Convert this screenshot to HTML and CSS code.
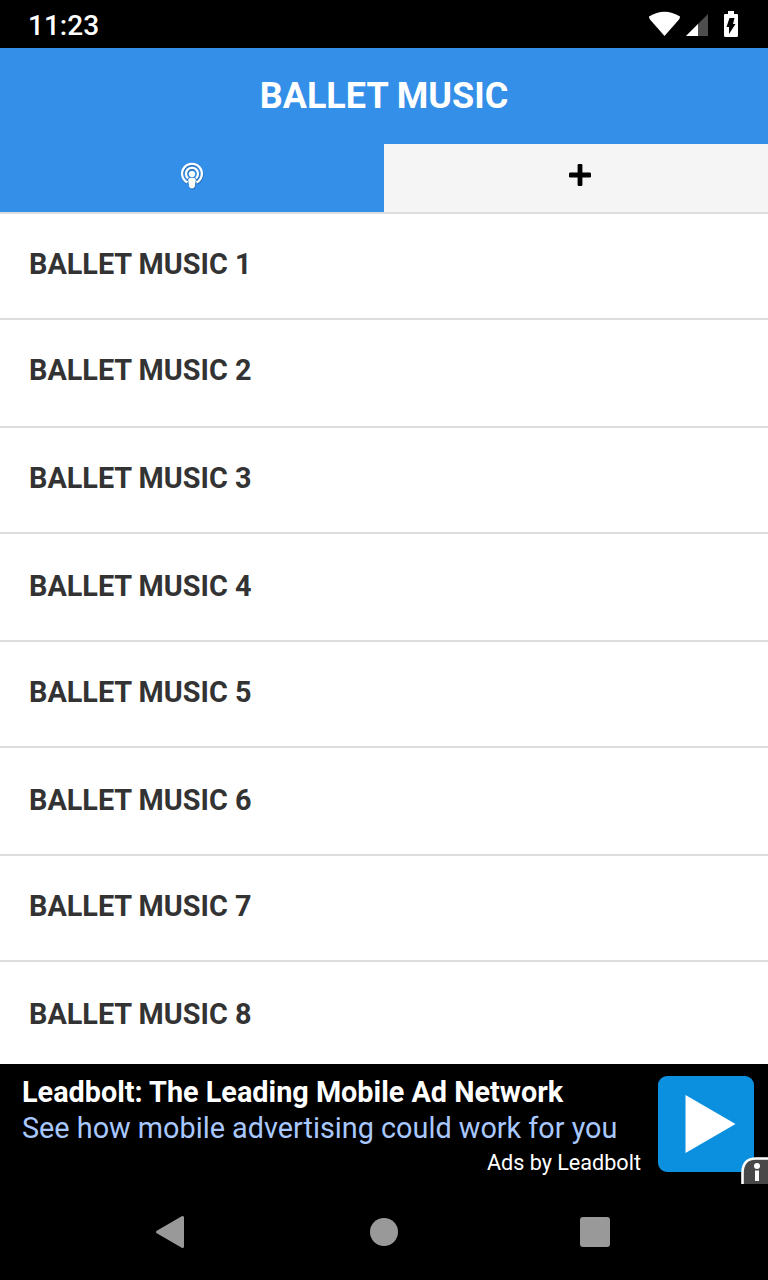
FILE: index.html
```html
<!DOCTYPE html>
<html lang="en">
<head>
<meta charset="utf-8">
<title>Ballet Music</title>
<link rel="stylesheet" href="styles.css">
</head>
<body>
<div class="status">
  <span class="time">11:23</span>
  <svg class="status-icons" width="96" height="48" viewBox="0 0 96 48">
    <path d="M1 16.500Q16.500 7 32 16.500Q32 18 31 19.500L16.500 36L2 19.500Q1 18 1 16.500Z" fill="#fff"/>
    <path d="M38 36L60 14V36Z" fill="#4d4d4d"/>
    <path d="M38 36L50 24V36Z" fill="#fff"/>
    <path d="M80 11h6v3h3q1 0 1 1v20.500q0 1.500-1.500 1.500h-11q-1.500 0-1.500-1.500V15q0-1 1-1h3Z" fill="#fff"/>
    <path d="M81.500 18h5l-1.500 6h2.500L81 34V27h-2.500Z" fill="#000"/>
  </svg>
</div>
<header class="title">BALLET MUSIC</header>
<nav class="tabs">
  <div class="tab active">
    <svg width="26" height="30" viewBox="0 0 26 30">
      <g transform="translate(.4 1)" fill="none" stroke="#1d5c99" stroke-width="2.400" opacity=".75">
        <path d="M8.500 21.500A9.900 9.900 0 1 1 17.500 21.500"/>
        <path d="M9 17.300A6 6 0 1 1 17 17.300"/>
        <path d="M9.200 19.200q0-2.400 3.800-2.400t3.800 2.400l-1 6.300q-.3 1.900-2.800 1.900t-2.800-1.900Z" fill="#1d5c99" stroke="none"/>
      </g>
      <g fill="none" stroke="#fff" stroke-width="2.300">
        <path d="M8.500 21.500A9.900 9.900 0 1 1 17.500 21.500"/>
        <path d="M9 17.300A6 6 0 1 1 17 17.300"/>
      </g>
      <circle cx="13" cy="13" r="3.100" fill="#fff"/>
      <path d="M9.200 19.200q0-2.400 3.800-2.400t3.800 2.400l-1 6.300q-.3 1.900-2.800 1.900t-2.800-1.900Z" fill="#fff"/>
    </svg>
  </div>
  <div class="tab">
    <svg width="22" height="22" viewBox="0 0 22 22">
      <rect x="8.600" width="4.800" height="22" rx="1.200"/>
      <rect y="8.600" width="22" height="4.800" rx="1.200"/>
    </svg>
  </div>
</nav>
<main class="list">
  <div class="row">BALLET MUSIC 1</div>
  <div class="row tall">BALLET MUSIC 2</div>
  <div class="row">BALLET MUSIC 3</div>
  <div class="row tall low">BALLET MUSIC 4</div>
  <div class="row">BALLET MUSIC 5</div>
  <div class="row tall low">BALLET MUSIC 6</div>
  <div class="row">BALLET MUSIC 7</div>
  <div class="row tall low">BALLET MUSIC 8</div>
</main>
<aside class="ad">
  <div class="ad-text">
    <div class="ad-title">Leadbolt: The Leading Mobile Ad Network</div>
    <div class="ad-sub">See how mobile advertising could work for you</div>
    <div class="ad-by">Ads by Leadbolt</div>
  </div>
  <svg class="ad-icon" width="96" height="96" viewBox="0 0 96 96">
    <rect width="96" height="96" rx="9" fill="#0a90df"/>
    <path d="M27.500 19L77.500 48L27.500 77Z" fill="#fff"/>
  </svg>
  <svg class="info" width="28" height="28" viewBox="0 0 28 28">
    <path d="M2.500 28V17Q2.500 2.500 16 2.500H28V28Z" fill="#484848"/>
    <path d="M2.500 28V17Q2.500 2.500 16 2.500H28" fill="none" stroke="#fff" stroke-width="2.600"/>
    <circle cx="17" cy="10" r="3" fill="#fff"/>
    <path d="M15 14.500h4V25h-4Z" fill="#fff"/>
  </svg>
</aside>
<footer class="navbar">
  <svg width="768" height="96" viewBox="0 0 768 96">
    <g fill="#999" stroke="#999" stroke-linejoin="round">
      <path d="M157.500 48L182.500 33.500V62.500Z" stroke-width="3"/>
      <circle cx="384" cy="48" r="14" stroke="none"/>
      <rect x="580" y="33" width="30" height="30" rx="3" stroke="none"/>
    </g>
  </svg>
</footer>
</body>
</html>
```

FILE: styles.css
```css
* { box-sizing: border-box; }
body {
  margin: 0;
  width: 768px;
  height: 1280px;
  overflow: hidden;
  display: flex;
  flex-direction: column;
  background: #fff;
  font-family: Roboto, "Liberation Sans", sans-serif;
}
svg { display: block; flex: none; }
.status {
  height: 48px;
  flex: none;
  display: flex;
  justify-content: space-between;
  padding: 0 24px 0 28px;
  background: #000;
}
.time {
  color: #fff;
  font-size: 28px;
  font-weight: 500;
  line-height: 52px;
}
.title {
  height: 96px;
  flex: none;
  background: #348fe8;
  color: #fff;
  font-size: 36px;
  font-weight: 700;
  line-height: 97px;
  text-align: center;
}
.tabs {
  height: 70px;
  flex: none;
  display: flex;
  border-bottom: 2px solid #ddd;
}
.tab {
  width: 50%;
  display: flex;
  justify-content: center;
  align-items: flex-start;
  padding-top: 20px;
  padding-left: 8px;
  background: #f5f5f5;
}
.tab.active {
  background: #348fe8;
  padding-top: 17px;
  padding-left: 0;
}
.list {
  height: 850px;
  flex: none;
  overflow: hidden;
}
.row {
  height: 106px;
  padding-left: 29px;
  border-bottom: 2px solid #ddd;
  color: #333;
  font-size: 28.8px;
  font-weight: 700;
  line-height: 100px;
}
.row.tall { height: 108px; }
.row.low { line-height: 104px; }
.ad {
  height: 120px;
  flex: none;
  position: relative;
  display: flex;
  justify-content: space-between;
  padding: 12px 14px 0 22px;
  background: #000;
}
.ad-text { width: 619px; white-space: nowrap; }
.ad-title {
  color: #fff;
  font-size: 28.8px;
  font-weight: 700;
  line-height: 33px;
}
.ad-sub {
  color: #a8c8ff;
  font-size: 28.8px;
  line-height: 38px;
}
.ad-by {
  color: #fff;
  font-size: 21.6px;
  line-height: 32px;
  text-align: right;
}
.info {
  position: absolute;
  right: 0;
  bottom: 0;
}
.navbar {
  height: 96px;
  flex: none;
  background: #000;
}
```
